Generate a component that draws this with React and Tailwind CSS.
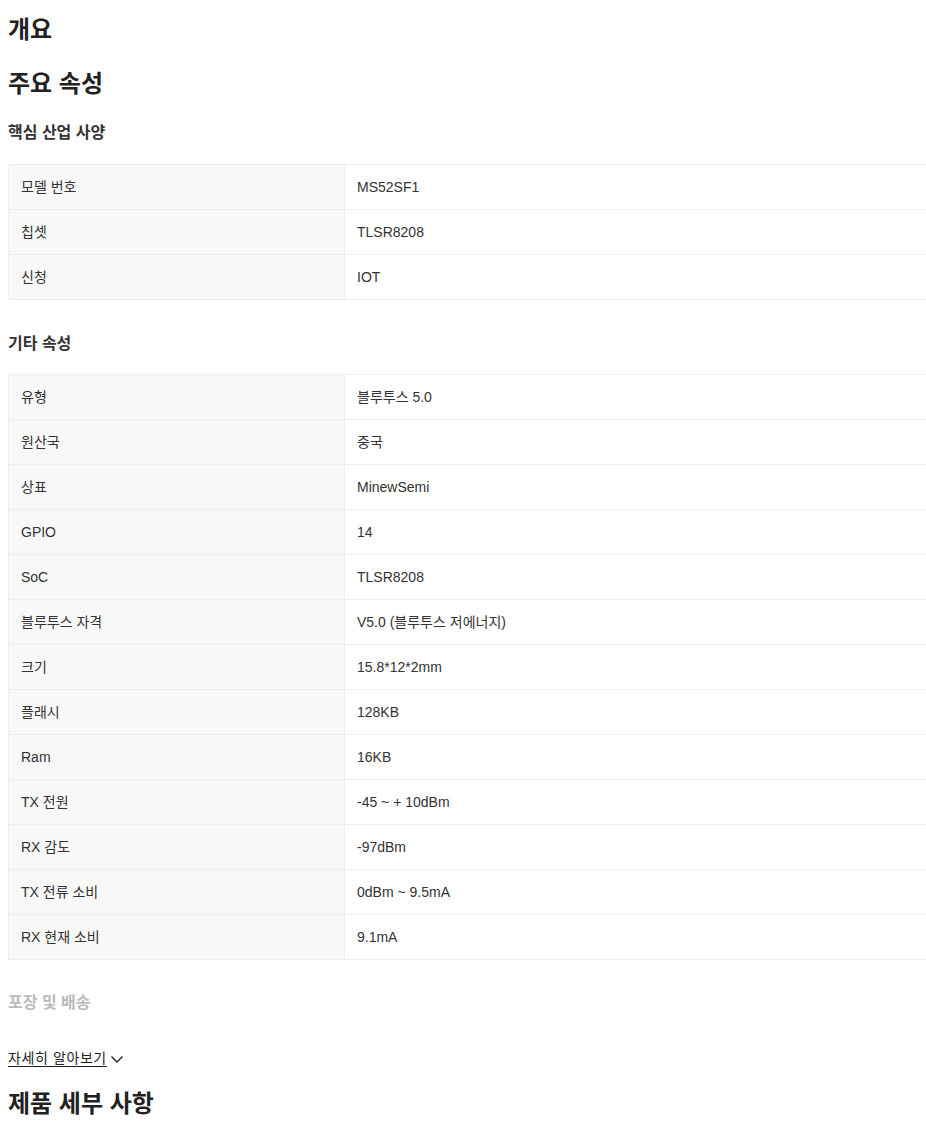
import React from "react";

const core = [
  ["모델 번호", "MS52SF1"],
  ["칩셋", "TLSR8208"],
  ["신청", "IOT"],
];

const other = [
  ["유형", "블루투스 5.0"],
  ["원산국", "중국"],
  ["상표", "MinewSemi"],
  ["GPIO", "14"],
  ["SoC", "TLSR8208"],
  ["블루투스 자격", "V5.0 (블루투스 저에너지)"],
  ["크기", "15.8*12*2mm"],
  ["플래시", "128KB"],
  ["Ram", "16KB"],
  ["TX 전원", "-45 ~ + 10dBm"],
  ["RX 감도", "-97dBm"],
  ["TX 전류 소비", "0dBm ~ 9.5mA"],
  ["RX 현재 소비", "9.1mA"],
];

function Table({ rows }) {
  return (
    <div className="w-[930px] border-t border-l border-[#eeeeee]">
      {rows.map(([k, v]) => (
        <div key={k} className="flex h-[45px] border-b border-[#eeeeee]">
          <div className="w-[336px] shrink-0 bg-[#f8f8f8] border-r border-[#eeeeee] pl-[12px] flex items-center text-[14px] text-[#333333]">
            {k}
          </div>
          <div className="flex-1 pl-[12px] flex items-center text-[14px] text-[#333333]">
            {v}
          </div>
        </div>
      ))}
    </div>
  );
}

export default function App() {
  return (
    <div
      className="w-full overflow-hidden bg-white text-[#222222] pl-[8px]"
      style={{ fontFamily: '"Liberation Sans", Arial, "Noto Sans CJK KR", sans-serif', minHeight: 1130 }}
    >
      <h2 className="pt-[12px] text-[24px] leading-[36px] font-bold">개요</h2>
      <h2 className="mt-[18px] text-[24px] leading-[36px] font-bold">주요 속성</h2>
      <h3 className="mt-[19px] text-[16px] leading-[24px] font-bold text-[#333333]">핵심 산업 사양</h3>
      <div className="mt-[19px]">
        <Table rows={core} />
      </div>
      <h3 className="mt-[32px] text-[16px] leading-[24px] font-bold text-[#333333]">기타 속성</h3>
      <div className="mt-[18px]">
        <Table rows={other} />
      </div>
      <h3 className="mt-[31px] text-[16px] leading-[24px] font-bold text-[#bbbbbb]">포장 및 배송</h3>
      <div className="mt-[33px] flex items-center text-[14px] leading-[20px] text-[#222222]">
        <span className="underline underline-offset-[3px] tracking-[0.6px]">자세히 알아보기</span>
        <svg width="14" height="14" viewBox="0 0 14 14" className="ml-[3px] mt-[2px]">
          <path d="M1.5 4.5 L7 10 L12.5 4.5" fill="none" stroke="#222" strokeWidth="1.4" />
        </svg>
      </div>
      <h2 className="mt-[18px] text-[24px] leading-[36px] font-bold">제품 세부 사항</h2>
    </div>
  );
}
